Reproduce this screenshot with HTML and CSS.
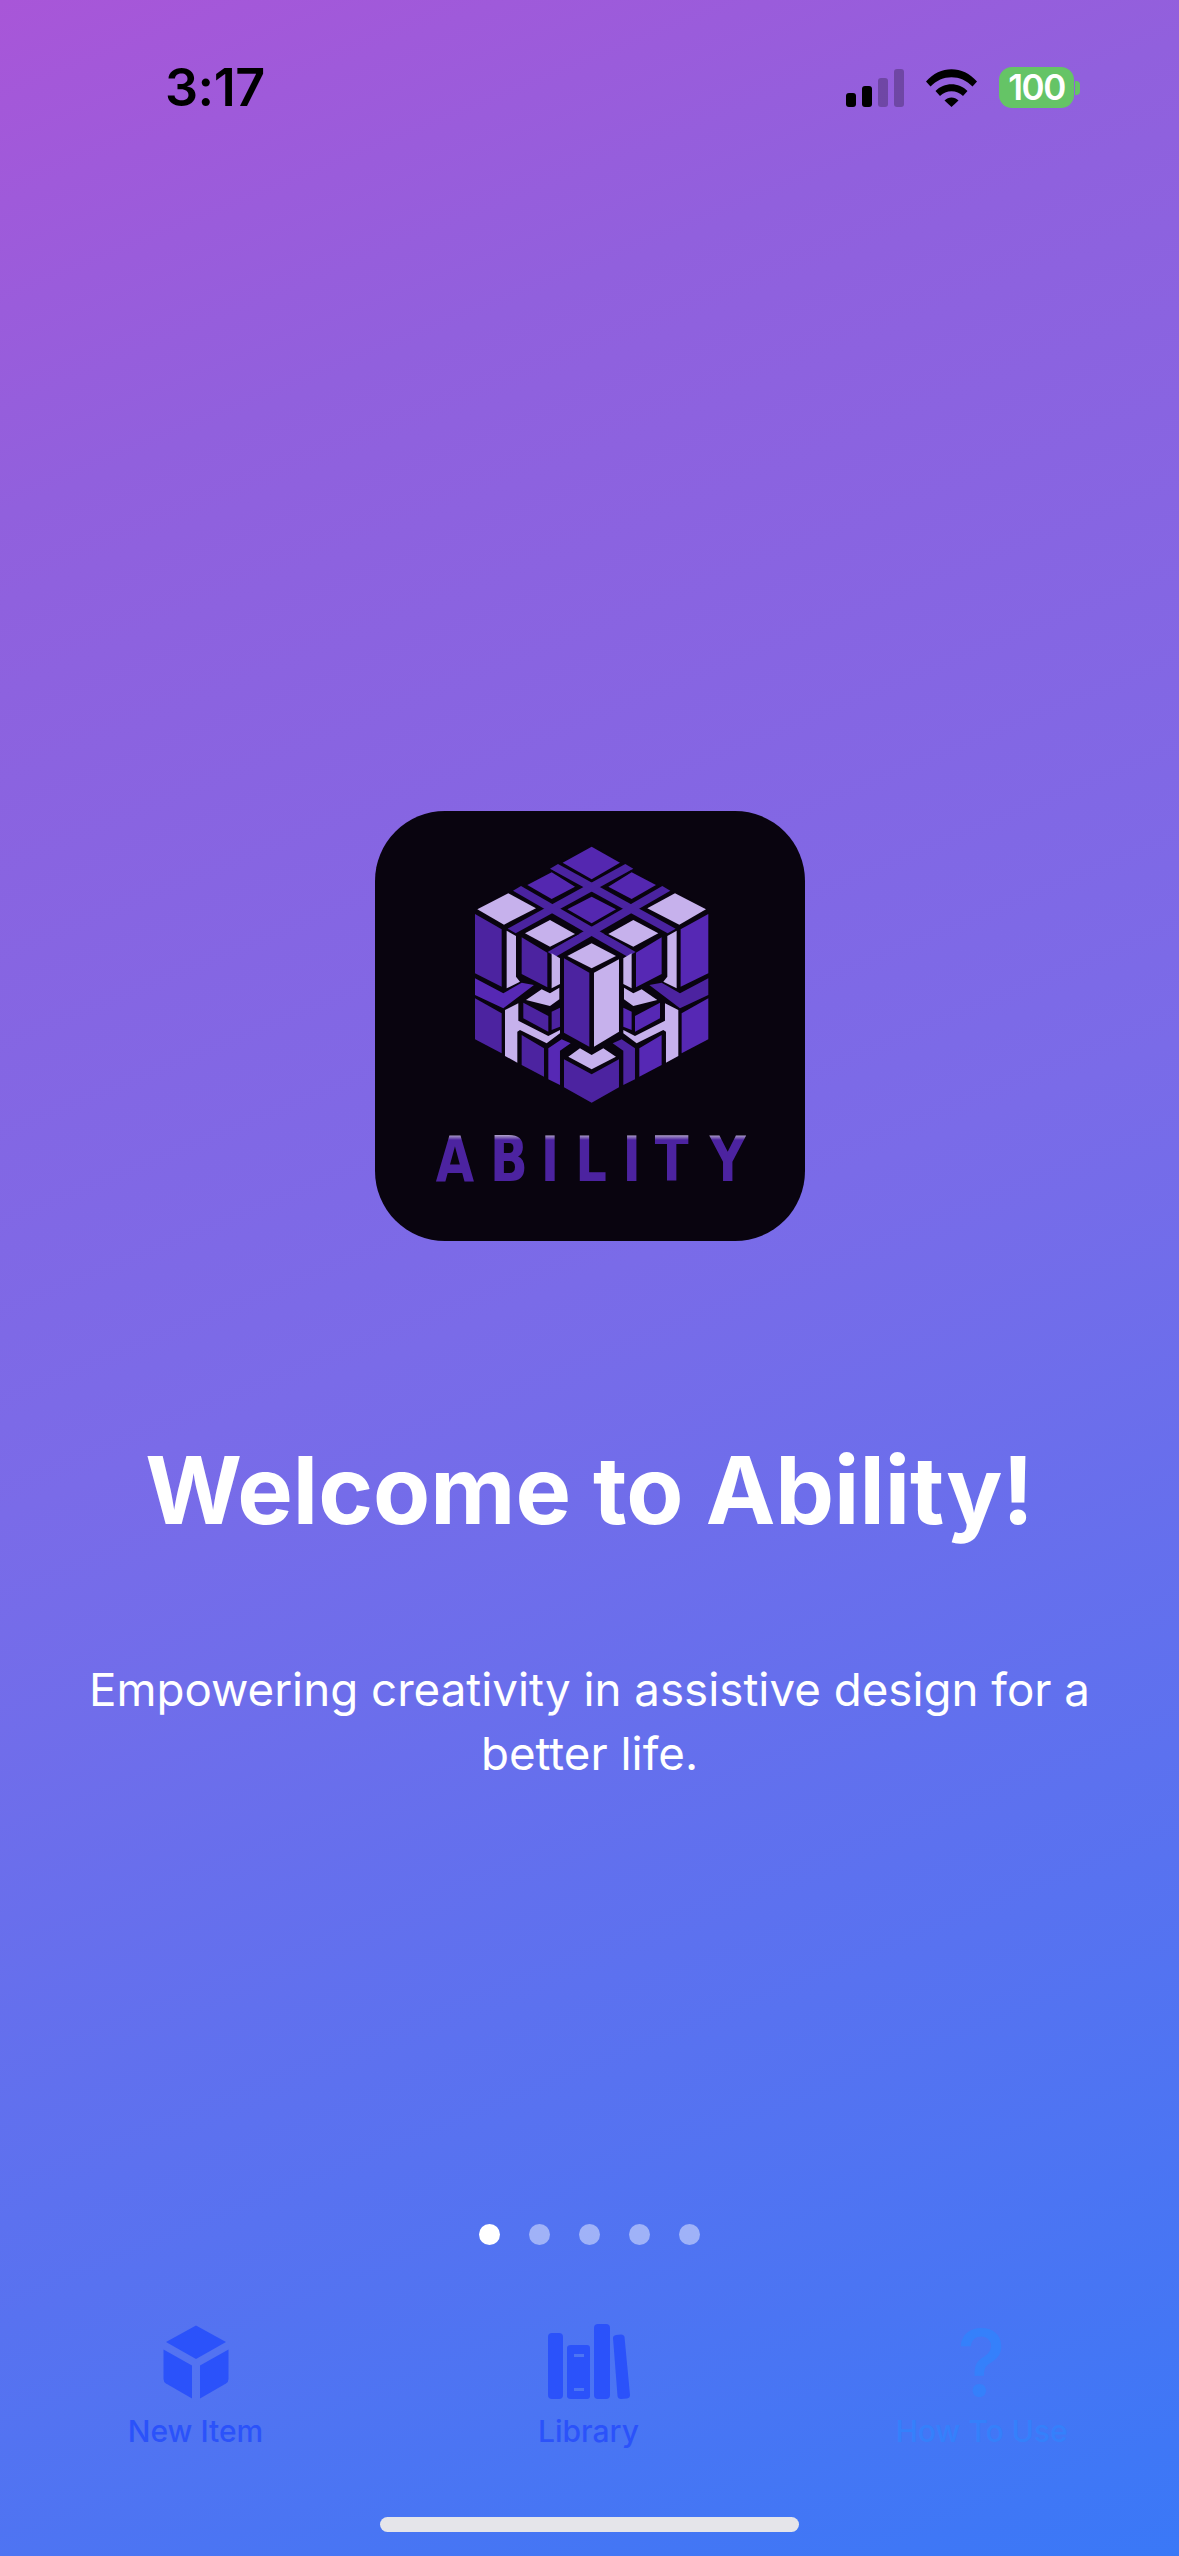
FILE: index.html
```html
<!DOCTYPE html>
<html lang="en">
<head>
<meta charset="utf-8">
<title>Welcome to Ability</title>
<link rel="stylesheet" href="styles.css">
</head>
<body>
<div class="screen">
  <header class="status">
    <span class="time">3:17</span>
    <div class="status-icons">
      <div class="signal">
        <i class="bar b1"></i><i class="bar b2"></i><i class="bar b3 dim"></i><i class="bar b4 dim"></i>
      </div>
      <svg class="wifi" viewBox="0 0 51 38">
        <path d="M0 12.5C14-4 37-4 51 12.5L46.5 17.5C35 5 16 5 4.5 17.5Z"/>
        <path d="M9.5 22C18 13 33 13 41.5 22L37 27C31 20.5 20 20.5 14 27Z"/>
        <path d="M18.5 31.5C22.5 27.5 28.5 27.5 32.5 31.5L25.5 38Z"/>
      </svg>
      <div class="battery"><span class="battery-body">100</span><i class="battery-cap"></i></div>
    </div>
  </header>

  <main class="content">
    <svg class="logo" viewBox="0 0 430 430">
      <defs>
        <linearGradient id="wordmark" gradientUnits="userSpaceOnUse" x1="0" y1="324" x2="0" y2="329">
          <stop offset="0" stop-color="#b3a6cb"/>
          <stop offset="1" stop-color="#4c23a0"/>
        </linearGradient>
      </defs>
      <rect class="logo-bg" width="430" height="430" rx="70"/>
      <g transform="translate(65 19) scale(.3333)">
        <g class="c-band">
          <polygon points="330,116 354,102 707,296 683,310"/>
          <polygon points="580,116 556,102 203,296 227,310"/>
          <polygon points="219,182 243,168 587,366 563,380"/>
          <polygon points="691,182 667,168 323,366 347,380"/>
        </g>
        <g class="t c-mid">
          <polygon points="455,50 540,98 455,148 368,98"/>
          <polygon points="262,165 335,127 405,170 335,207"/>
          <polygon points="505,170 575,127 648,165 575,207"/>
          <polygon points="455,200 528,238 455,280 382,238"/>
        </g>
        <g class="t c-light">
          <polygon points="112,238 205,190 288,235 192,284"/>
          <polygon points="798,238 705,190 622,235 718,284"/>
          <polygon points="255,310 330,270 405,312 330,350"/>
          <polygon points="655,310 580,270 505,312 580,350"/>
          <polygon points="382,378 455,340 528,378 455,415"/>
        </g>

        <polygon class="c-dark" points="105,252 185,298 185,470 105,430"/>
        <polygon class="c-light" points="200,302 228,318 228,440 240,455 200,475"/>
        <polygon class="c-dark" points="245,322 322,368 322,472 245,432"/>
        <polygon class="c-light" points="335,370 360,385 360,462 335,475"/>
        <polygon class="c-vivid" points="105,445 190,490 245,458 282,465 190,535 105,495"/>
        <polygon class="c-light" points="258,510 305,478 330,490 358,473 358,508 330,528"/>
        <polygon class="c-dark" points="250,518 325,558 325,605 250,565"/>
        <polygon class="c-dark" points="335,545 360,533 360,590 335,600"/>
        <polygon class="c-light" points="195,540 235,520 235,572 325,618 360,600 360,610 320,640 240,600 232,605 232,698 195,678"/>
        <polygon class="c-dark" points="105,505 185,550 185,670 105,628"/>
        <polygon class="c-dark" points="245,615 312,655 312,740 245,705"/>
        <polygon class="c-vivid" points="325,655 365,628 392,640 360,662 360,765 325,748"/>

        <polygon class="c-vivid" points="722,298 805,252 805,430 722,470"/>
        <polygon class="c-light" points="710,302 682,318 682,440 670,455 710,475"/>
        <polygon class="c-vivid" points="665,322 588,368 588,472 665,432"/>
        <polygon class="c-light" points="575,370 550,385 550,462 575,475"/>
        <polygon class="c-dark" points="805,445 720,490 665,458 628,465 720,535 805,495"/>
        <polygon class="c-light" points="652,510 605,478 580,490 552,473 552,508 580,528"/>
        <polygon class="c-vivid" points="660,518 585,558 585,605 660,565"/>
        <polygon class="c-vivid" points="575,545 550,533 550,590 575,600"/>
        <polygon class="c-light" points="715,540 675,520 675,572 585,618 550,600 550,610 590,640 670,600 678,605 678,698 715,678"/>
        <polygon class="c-vivid" points="725,550 805,505 805,628 725,670"/>
        <polygon class="c-vivid" points="665,615 598,655 598,740 665,705"/>
        <polygon class="c-dark" points="585,655 545,628 518,640 550,662 550,765 585,748"/>

        <polygon class="c-dark" points="372,385 448,428 448,650 372,608"/>
        <polygon class="c-light" points="462,428 537,388 537,605 462,650"/>
        <polygon class="c-light" points="385,680 420,655 455,675 490,655 528,680 455,718"/>
        <polygon class="c-dark" points="372,688 455,733 537,688 537,772 455,818 372,772"/>
      </g>
      <text class="wordmark" transform="scale(.8 1)" x="100 167.500 218.750 270 321 371 441" y="370">ABILITY</text>
    </svg>

    <h1 class="title">Welcome to Ability!</h1>
    <p class="subtitle">Empowering creativity in assistive design for a better life.</p>
  </main>

  <div class="dots">
    <i class="dot active"></i><i class="dot"></i><i class="dot"></i><i class="dot"></i><i class="dot"></i>
  </div>

  <nav class="tabs">
    <div class="tab tab-blue">
      <svg class="tab-icon cube" viewBox="0 0 68 77">
        <path d="M34 1.500 64 18 34 35 4 18Z"/>
        <path d="M1.500 25.500 30 41.500V74.500L4 59.500Q1.500 58 1.500 55Z"/>
        <path d="M66.500 25.500 38 41.500V74.500L64 59.500Q66.500 58 66.500 55Z"/>
      </svg>
      <span class="tab-label">New Item</span>
    </div>
    <div class="tab tab-blue">
      <svg class="tab-icon books" viewBox="0 0 82 77">
        <rect x="0" y="9" width="15" height="66" rx="4"/>
        <path fill-rule="evenodd" d="M23 21H39Q42 21 42 24V72Q42 75 39 75H23Q19 75 19 72V24Q19 21 23 21ZM26 30V33H36V30ZM26 64V67H36V64Z"/>
        <rect x="46" y="0" width="16" height="75" rx="4"/>
        <path d="M68 11 73 10.500Q76 10.500 76.500 13L82 71Q82 74 79 74.500L73 75Q70 75 69.500 72L65 14Q65 11.500 68 11Z"/>
      </svg>
      <span class="tab-label">Library</span>
    </div>
    <div class="tab tab-sky">
      <span class="tab-icon help">?</span>
      <span class="tab-label">How To Use</span>
    </div>
  </nav>

  <div class="home-indicator"></div>
</div>
</body>
</html>
```

FILE: styles.css
```css
* { box-sizing: border-box; }
html, body { margin: 0; padding: 0; }
body { font-family: Inter, "Noto Sans", sans-serif; }

.screen {
  width: 1179px;
  height: 2556px;
  display: flex;
  flex-direction: column;
  overflow: hidden;
  background: linear-gradient(158deg, #a856d8 0%, #9160dd 17%, #7a6be8 50%, #3a78f7 100%);
}

/* status bar */
.status {
  height: 174px;
  padding: 59px 99px 0 165px;
  display: flex;
  justify-content: space-between;
  align-items: flex-start;
}
.time {
  font-size: 52px;
  line-height: 58px;
  font-weight: 600;
  letter-spacing: -.5px;
  color: #000;
}
.status-icons {
  display: flex;
  align-items: flex-end;
  height: 42px;
  margin-top: 8px;
}
.signal { display: flex; align-items: flex-end; gap: 6px; height: 38px; margin-bottom: 2px; }
.bar { display: block; width: 10px; background: #000; border-radius: 3px; }
.bar.dim { background: rgba(0, 0, 0, .25); }
.b1 { height: 14px; }
.b2 { height: 21px; }
.b3 { height: 29px; }
.b4 { height: 38px; }
.wifi { width: 51px; height: 38px; margin: 0 22px 2px 22px; fill: #000; }
.battery { display: flex; align-items: center; height: 41px; margin-bottom: 1px; }
.battery-body {
  width: 75px;
  height: 41px;
  background: #65c466;
  border-radius: 13px;
  color: #fff;
  font-size: 35px;
  font-weight: 600;
  line-height: 41px;
  text-align: center;
  letter-spacing: -1.5px;
}
.battery-cap {
  display: block;
  width: 5px;
  height: 14px;
  margin-left: 1px;
  background: #65c466;
  border-radius: 0 4px 4px 0;
}

/* content */
.content {
  flex: 1;
  display: flex;
  flex-direction: column;
  align-items: center;
  padding-top: 637px;
}
.logo { display: block; width: 430px; height: 430px; flex: none; }
.logo-bg { fill: #09040f; }
.c-band { fill: #4a23a0; }
.c-mid { fill: #5427b0; }
.c-light { fill: #c6b1ec; }
.c-dark { fill: #4c23a0; }
.c-vivid { fill: #5628b4; }
.t polygon { stroke: #09040f; stroke-width: 12; paint-order: stroke fill; stroke-linejoin: miter; }
.wordmark {
  font-family: "DejaVu Sans", sans-serif;
  font-size: 62px;
  font-weight: 700;
  text-anchor: middle;
  fill: url(#wordmark);
}
.title {
  margin: 192px 0 0;
  font-size: 93.300px;
  line-height: 116px;
  font-weight: 700;
  color: #fff;
  text-align: center;
}
.subtitle {
  margin: 109px 0 0;
  width: 1040px;
  font-size: 45.700px;
  line-height: 64px;
  font-weight: 400;
  color: #fff;
  text-align: center;
}

/* pager dots */
.dots {
  display: flex;
  justify-content: center;
  gap: 29px;
  margin-bottom: 79px;
}
.dot { display: block; width: 21px; height: 21px; border-radius: 50%; background: rgba(255, 255, 255, .45); }
.dot.active { background: #fff; }

/* tabs */
.tabs {
  display: grid;
  grid-template-columns: repeat(3, 393px);
  height: 232px;
  margin-left: -1px;
}
.tab { display: flex; flex-direction: column; align-items: center; }
.tab-icon { display: block; height: 77px; }
.cube { width: 68px; }
.books { width: 82px; }
.help {
  font-size: 92px;
  line-height: 77px;
  font-weight: 500;
}
.tab-label {
  margin-top: 12px;
  font-size: 30px;
  line-height: 36px;
  font-weight: 500;
}
.tab-blue { color: #2b52fa; }
.tab-blue svg { fill: #2b52fa; }
.tab-sky { color: #3580fb; }

.home-indicator {
  position: absolute;
  left: 380px;
  top: 2517px;
  width: 419px;
  height: 15px;
  border-radius: 8px;
  background: #e5e5ea;
}
```
